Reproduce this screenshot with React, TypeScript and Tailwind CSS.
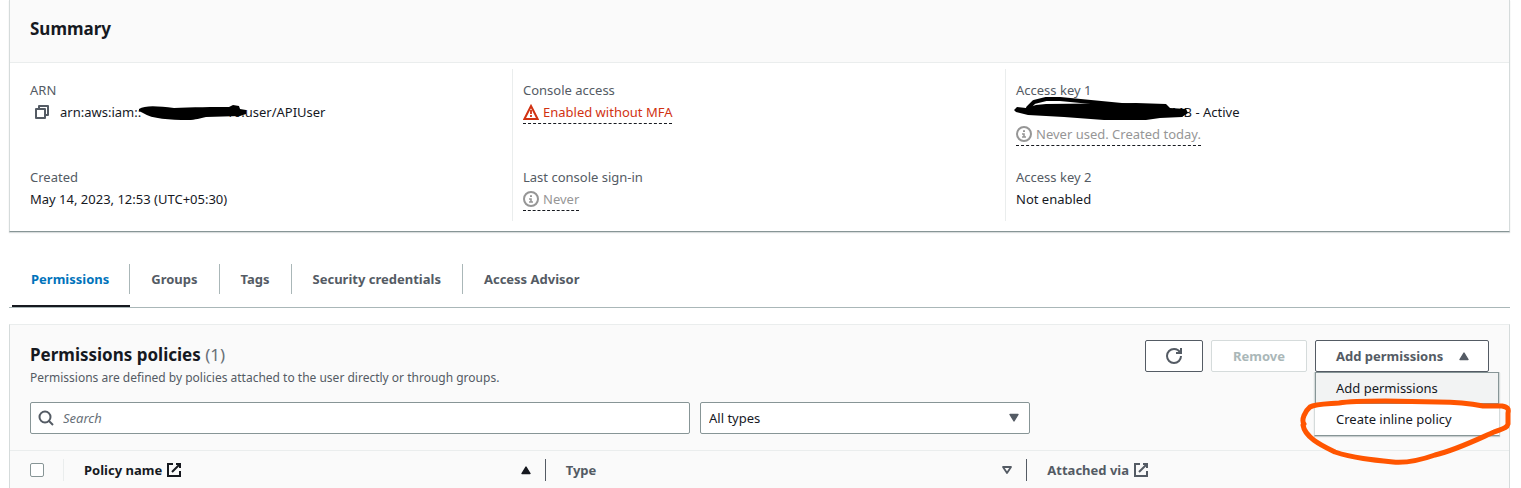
import type { ReactNode } from "react";

function InfoIcon() {
  return (
    <svg viewBox="0 0 16 16" className="size-4 shrink-0" fill="none" stroke="currentColor" strokeWidth="2" aria-hidden="true">
      <circle cx="8" cy="8" r="7" />
      <path d="M8 11V8H6M10 11H6" strokeWidth="1.6" />
      <path d="M7 5.2h2" strokeWidth="1.7" />
    </svg>
  );
}

function WarningIcon() {
  return (
    <svg viewBox="0 0 16 16" className="size-4 shrink-0" fill="none" stroke="currentColor" aria-hidden="true">
      <path d="M8 2 14.6 15H1.4L8 2Z" strokeWidth="2" />
      <path d="M8 6v4M8 11v2" strokeWidth="1.8" />
    </svg>
  );
}

function CopyIcon() {
  return (
    <svg viewBox="0 0 16 16" className="size-4" fill="none" stroke="currentColor" strokeWidth="2" strokeLinejoin="round" aria-hidden="true">
      <path d="M2 5h9v9H2z" />
      <path d="M5 5V2h9v9h-3" />
    </svg>
  );
}

function ExternalIcon() {
  return (
    <svg viewBox="0 0 16 16" className="size-4 shrink-0" fill="none" stroke="currentColor" strokeWidth="2" aria-hidden="true">
      <path d="M14 9v5H2V2h5" />
      <path d="M10 2h4v4M14 2l-8 8" />
    </svg>
  );
}

function SearchIcon() {
  return (
    <svg viewBox="0 0 16 16" className="size-4" fill="none" stroke="currentColor" strokeWidth="2" aria-hidden="true">
      <circle cx="7" cy="7" r="5.5" />
      <path d="m15 15-4.5-4.5" />
    </svg>
  );
}

function RefreshIcon() {
  return (
    <svg viewBox="0 0 16 16" className="size-4" fill="none" stroke="currentColor" strokeWidth="2" aria-hidden="true">
      <path d="M15 8a7 7 0 1 1-7-7 6.9 6.9 0 0 1 6.3 4" />
      <path d="M10 5h5V0" />
    </svg>
  );
}

type TriangleKind = "up" | "down" | "outline";

function Triangle({ kind }: { kind: TriangleKind }) {
  return (
    <svg viewBox="0 0 16 16" className="size-4 shrink-0" stroke="currentColor" strokeLinejoin="round" aria-hidden="true">
      {kind === "up" && <path d="M4 11.5 8 5l4 6.5H4Z" fill="currentColor" strokeWidth="1.4" />}
      {kind === "down" && <path d="M4 4.5h8L8 11 4 4.5Z" fill="currentColor" strokeWidth="1.4" />}
      {kind === "outline" && <path d="M4 5h8l-4 6-4-6Z" fill="none" strokeWidth="1.8" />}
    </svg>
  );
}

function Field({ label, children }: { label: string; children: ReactNode }) {
  return (
    <div>
      <dt className="text-[#545b64]">{label}</dt>
      <dd className="flex flex-col items-start">{children}</dd>
    </div>
  );
}

function SummaryColumn({ divided, children }: { divided?: boolean; children: ReactNode }) {
  return (
    <dl
      className={
        divided
          ? "grid grid-rows-[67px_auto] gap-5 border-l border-[#eaeded] py-[10px] pl-[10px]"
          : "grid grid-rows-[67px_auto] gap-5 border-l border-transparent py-[10px] pl-[10px]"
      }
    >
      {children}
    </dl>
  );
}

function StatusButton({ tone, children }: { tone: "error" | "muted"; children: ReactNode }) {
  return (
    <button
      type="button"
      className={
        tone === "error"
          ? "flex items-center gap-1 border-b border-dashed border-[#16191f] text-[#d13212]"
          : "flex items-center gap-1 border-b border-dashed border-[#16191f] text-[#969696]"
      }
    >
      {children}
    </button>
  );
}

const tabs = ["Permissions", "Groups", "Tags", "Security credentials", "Access Advisor"];

export default function App() {
  return (
    <main className="min-h-screen bg-white pr-[11px] pl-[9px] font-['Noto_Sans',sans-serif] text-[13px] leading-[22px] text-[#16191f]">
      <section className="border-x border-b border-x-[#d5dbdb] border-b-[#879596] shadow-[0_1px_1px_0_rgba(0,28,36,0.15)]">
        <header className="border-b border-[#eaeded] bg-[#fafafa] px-5 pt-[18px] pb-[22px]">
          <h2 className="text-[17px] font-bold">Summary</h2>
        </header>
        <div className="grid grid-cols-3 pt-[6px] pr-[11px] pb-[10px] pl-[9px]">
          <SummaryColumn>
            <Field label="ARN">
              <div className="flex items-center pl-1">
                <button type="button" aria-label="Copy ARN" className="mr-[10px] text-[#545b64]">
                  <CopyIcon />
                </button>
                <span>arn:aws:iam::</span>
                <span className="relative flex w-[100px] justify-end">
                  10
                  <svg viewBox="0 0 110 18" className="absolute top-px -left-[3px] h-[18px] w-[110px]" aria-hidden="true">
                    <path d="M1 7C7 3 20 4 36 6c16-1 42-1 55-1l4-2 6 1 1 3 6 1v4l-6 2-34 1c-6 1-10 3-18 3C32 18 14 17 5 11L1 9Z" />
                  </svg>
                </span>
                <span>:user/APIUser</span>
              </div>
            </Field>
            <Field label="Created">May 14, 2023, 12:53 (UTC+05:30)</Field>
          </SummaryColumn>
          <SummaryColumn divided>
            <Field label="Console access">
              <StatusButton tone="error">
                <WarningIcon />
                Enabled without MFA
              </StatusButton>
            </Field>
            <Field label="Last console sign-in">
              <StatusButton tone="muted">
                <InfoIcon />
                Never
              </StatusButton>
            </Field>
          </SummaryColumn>
          <SummaryColumn divided>
            <Field label="Access key 1">
              <div className="flex">
                <span className="relative flex w-[176px] justify-end">
                  MB
                  <svg viewBox="0 0 176 26" className="absolute -top-1 -left-[2px] h-[26px] w-[176px]" aria-hidden="true">
                    <path d="M0 13 3 10l9 1L22 8l10-1 90-1 30 1 4 4 16 1 2 4-6 4-22 1-14 2H90L50 20 14 18 2 15Z" />
                    <path d="M14 11 20 5l12-3h14l72 7" fill="none" stroke="#000" strokeWidth="4" strokeLinecap="round" strokeLinejoin="round" />
                  </svg>
                </span>
                <span className="whitespace-pre"> - Active</span>
              </div>
              <StatusButton tone="muted">
                <InfoIcon />
                Never used. Created today.
              </StatusButton>
            </Field>
            <Field label="Access key 2">Not enabled</Field>
          </SummaryColumn>
        </div>
      </section>

      <nav aria-label="User details" className="mt-[27px] flex h-[49px] border-b border-[#aab7b8] pl-[3px]">
        {tabs.map((tab, i) => (
          <a
            key={tab}
            href="#"
            className={
              i === 0
                ? "flex flex-col border-b-2 border-[#16191f] pt-[5px] font-bold text-[#0073bb]"
                : "flex flex-col pt-[5px] font-bold text-[#545b64]"
            }
          >
            <span
              className={
                i === 0
                  ? "border-r border-[#aab7b8] py-1 pr-5 pl-[19px]"
                  : i === tabs.length - 1
                    ? "px-[21px] py-1"
                    : "border-r border-[#aab7b8] px-[21px] py-1"
              }
            >
              {tab}
            </span>
          </a>
        ))}
      </nav>

      <section className="mt-4 border-x border-t border-x-[#d5dbdb] border-t-[#eaeded] bg-[#fafafa]">
        <header className="flex items-start justify-between px-5 pt-[15px]">
          <div className="pt-1">
            <h2 className="text-[17px] font-bold">
              Permissions policies <span className="font-normal text-[#687078]">(1)</span>
            </h2>
            <p className="mt-px text-[12px] text-[#545b64]">
              Permissions are defined by policies attached to the user directly or through groups.
            </p>
          </div>
          <div className="flex gap-2 text-[13px] font-bold">
            <button
              type="button"
              aria-label="Refresh"
              className="flex h-8 w-[58px] items-center justify-center rounded-[2px] border border-[#545b64] bg-white text-[#545b64]"
            >
              <RefreshIcon />
            </button>
            <button type="button" disabled className="h-8 w-24 rounded-[2px] border border-[#d5dbdb] bg-white text-[#aab7b8]">
              Remove
            </button>
            <div className="relative">
              <button
                type="button"
                aria-expanded="true"
                className="flex h-8 w-[174px] items-center justify-between rounded-[2px] border border-[#545b64] bg-white pr-4 pl-5 text-[#545b64]"
              >
                Add permissions
                <Triangle kind="up" />
              </button>
              <div
                role="menu"
                className="absolute top-8 -left-px z-10 w-[186px] border-x border-b border-x-[#d5dbdb] border-b-[#879596] bg-white font-normal shadow-[0_1px_1px_0_rgba(0,28,36,0.2)]"
              >
                <button
                  type="button"
                  role="menuitem"
                  className="block h-8 w-full border border-[#879596] bg-[#f2f3f3] pl-5 text-left text-[#16191f]"
                >
                  Add permissions
                </button>
                <button type="button" role="menuitem" className="block h-[31px] w-full pb-px pl-[21px] text-left text-[#16191f]">
                  Create inline policy
                </button>
                <svg
                  viewBox="0 0 220 70"
                  className="pointer-events-none absolute top-6 -left-5 h-[70px] w-[220px]"
                  fill="none"
                  stroke="#ff5500"
                  strokeWidth="5"
                  strokeLinecap="round"
                  strokeLinejoin="round"
                  aria-hidden="true"
                >
                  <path d="M9 28C6 24 10 15 15 11c5-3 16-3 29-4 12-2 28-2 46-2l53 1c16 0 30 1 45 4h19c6 1 7 3 6 7v11c-1 5-8 5-14 8-18 8-38 18-59 23-14 5-30 8-42 7-20-2-40-4-58-10C28 50 10 42 8 29" />
                </svg>
              </div>
            </div>
          </div>
        </header>

        <div className="flex gap-[10px] px-5 pt-[13px] pb-4">
          <div className="relative w-[660px]">
            <span className="absolute top-2 left-2 text-[#545b64]">
              <SearchIcon />
            </span>
            <input
              type="text"
              aria-label="Search policies"
              placeholder="Search"
              className="block h-8 w-full rounded-[2px] border border-[#879596] bg-white pr-2 pl-8 placeholder:text-[#687078] placeholder:italic"
            />
          </div>
          <div className="relative w-[330px]">
            <select
              aria-label="Filter by type"
              className="block h-8 w-full appearance-none rounded-[2px] border border-[#879596] bg-white px-2"
            >
              <option>All types</option>
            </select>
            <span className="pointer-events-none absolute top-2 right-2 text-[#545b64]">
              <Triangle kind="down" />
            </span>
          </div>
        </div>

        <table className="w-full table-fixed border-t border-[#eaeded] text-left text-[13px]">
          <colgroup>
            <col className="w-[54px]" />
            <col />
            <col />
            <col />
          </colgroup>
          <thead>
            <tr>
              <th className="p-0">
                <div className="my-2 flex h-[22px] items-center border-r border-[#eaeded] pl-5">
                  <input
                    type="checkbox"
                    aria-label="Select all policies"
                    className="size-[14px] appearance-none rounded-[2px] border border-[#879596] bg-white"
                  />
                </div>
              </th>
              <th className="p-0 font-bold">
                <div className="my-2 flex h-[22px] items-center border-r border-[#545b64] pr-[11px] pl-5">
                  <span>Policy name</span>
                  <span className="ml-1">
                    <ExternalIcon />
                  </span>
                  <span className="ml-auto">
                    <Triangle kind="up" />
                  </span>
                </div>
              </th>
              <th className="p-0 font-bold text-[#545b64]">
                <div className="my-2 flex h-[22px] items-center justify-between border-r border-[#545b64] pr-[11px] pl-5">
                  <span>Type</span>
                  <Triangle kind="outline" />
                </div>
              </th>
              <th className="p-0 font-bold text-[#545b64]">
                <div className="my-2 flex h-[22px] items-center gap-1 pl-5">
                  <span>Attached via</span>
                  <ExternalIcon />
                </div>
              </th>
            </tr>
          </thead>
        </table>
      </section>
    </main>
  );
}
